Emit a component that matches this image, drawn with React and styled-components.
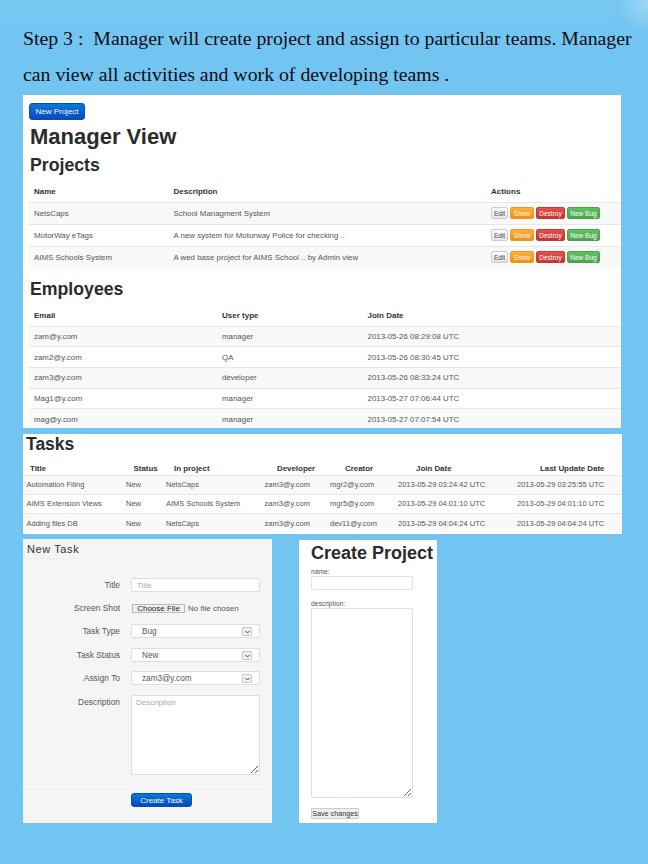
import React from "react";
import styled, { createGlobalStyle } from "styled-components";

const Global = createGlobalStyle`
  html, body { margin: 0; padding: 0; }
  body {
    width: 648px; height: 864px; overflow: hidden;
    background:
      radial-gradient(circle at 648px 0, #a2d9f6 0, #74c5f1 32px, rgba(116,197,241,0) 44px),
      linear-gradient(180deg, #78c8f3 0, #72c5f1 40px, #73c5f1 100%);
    font-family: "Liberation Sans", Arial, sans-serif;
    color: #333;
  }
  * { box-sizing: border-box; }
`;

const Page = styled.div`
  width: 648px; height: 864px; padding: 19.5px 0 0 23px;
`;
const Intro = styled.p`
  margin: 0 0 2.5px;
  font: 19.8px/36.5px "Liberation Serif", "Times New Roman", serif;
  color: #0b0b14;
  white-space: pre;
`;
const ManagerPanel = styled.section`
  width: 598px; height: 333px; background: #fff; padding: 8px 0 0 6px; overflow: hidden;
`;
const BlueButton = styled.button`
  display: block; padding: 0; border: 1px solid #0a4fb0; border-radius: 3px;
  width: ${p => p.$w}px; height: ${p => p.$h}px;
  background: linear-gradient(180deg, #0a79d8, #0449c4);
  color: #fff; font: ${p => p.$size}px "Liberation Sans", Arial, sans-serif;
  text-shadow: 0 -1px 0 rgba(0,0,0,.25);
`;
const MainTitle = styled.h1`
  margin: 3px 0 0; padding-left: 1px; font: bold 22px/28px "Liberation Sans", Arial, sans-serif; color: #2b2b2b;
`;
const SectionTitle = styled.h2`
  margin: ${p => p.$top}px 0 0; padding-left: 1px; font: bold 17.7px/24px "Liberation Sans", Arial, sans-serif; color: #2b2b2b;
`;
const Table = styled.div`
  margin-top: ${p => p.$top}px; font-size: ${p => p.$size}px;
`;
const HeadRow = styled.div`
  display: grid; grid-template-columns: ${p => p.$cols}; align-items: center;
  height: ${p => p.$h}px; padding-left: ${p => p.$pad}px;
  font-weight: bold; font-size: ${p => p.$size || 8}px; color: #333;
`;
const Row = styled.div`
  display: grid; grid-template-columns: ${p => p.$cols}; align-items: center;
  height: ${p => p.$h}px; padding-left: ${p => p.$pad}px;
  border-top: 1px solid #e8e8e8; color: #555;
  background: ${p => (p.$odd ? "#f9f9f9" : "#fff")};
`;
const Actions = styled.div`
  display: flex; gap: 2px;
`;
const ActionButton = styled.button`
  padding: 0; height: 12px; width: ${p => p.$w}px; border-radius: 2px;
  font: 6.5px "Liberation Sans", Arial, sans-serif;
  border: 1px solid ${p => p.$edge};
  background: ${p => p.$bg}; color: ${p => p.$fg};
`;
const TasksPanel = styled.section`
  width: 599px; height: 100px; margin-top: 6px; background: #fff; overflow: hidden;
`;
const TasksTitle = styled.h2`
  margin: 0; padding: 0 0 0 3px; font: bold 17.5px/20px "Liberation Sans", Arial, sans-serif; color: #2b2b2b;
`;
const FormsRow = styled.div`
  display: flex; gap: 27px; margin-top: 5px; align-items: flex-start;
`;
const TaskForm = styled.section`
  width: 249px; height: 284px; background: #f5f5f5; overflow: hidden;
`;
const FormHeader = styled.h3`
  margin: 0; height: 20px; padding-left: 4px;
  font: normal 11px/20px "Liberation Sans", Arial, sans-serif; letter-spacing: .6px; color: #333;
  border-bottom: 1px solid #efefef;
`;
const FormBody = styled.div`
  display: grid; grid-template-columns: 97px 129px; column-gap: 11px;
  padding-top: 19px; align-items: start; font-size: 8.4px; color: #555;
`;
const FieldLabel = styled.label`
  text-align: right; line-height: 14px; height: ${p => p.$h || 14}px; margin-bottom: ${p => p.$gap}px;
`;
const TextInput = styled.input`
  display: block; width: 129px; height: 14px; padding: 0 5px; margin-bottom: ${p => p.$gap}px;
  border: 1px solid #dedede; border-radius: 2px; background: #fff;
  font: 8px "Liberation Sans", Arial, sans-serif;
  &::placeholder { color: #aaa; }
`;
const FileInput = styled.input`
  display: block; width: 129px; height: 14px; margin: 0 0 ${p => p.$gap}px; padding: 0 0 0 1px;
  font: 8px/12px "Liberation Sans", Arial, sans-serif; color: #555;
  &::file-selector-button {
    width: 53px; height: 9px; margin: 3px 3px 0 0; padding: 0;
    border: 1px solid #bbb; background: #efefef; color: #222;
    font: 8px "Liberation Sans", Arial, sans-serif;
    line-height: 7px;
  }
`;
const SelectWrap = styled.div`
  position: relative; width: 129px; height: 14px; margin-bottom: ${p => p.$gap}px;
`;
const Select = styled.select`
  display: block; width: 100%; height: 100%; padding: 0 0 0 10px; appearance: none;
  border: 1px solid #dedede; border-radius: 2px; background: #fff; color: #555;
  font: 8.2px "Liberation Sans", Arial, sans-serif;
`;
const SelectArrow = styled.span`
  position: absolute; top: 3px; right: 8px; width: 10px; height: 9px;
  display: flex; align-items: center; justify-content: center;
  background: #eee; border: 1px solid #ccc; border-radius: 1px;
`;
const TextArea = styled.textarea`
  display: block; width: ${p => p.$w}px; height: ${p => p.$h}px; padding: 2px 4px; margin: 0; resize: vertical;
  border: 1px solid #dedede; border-radius: 2px; background: #fff;
  font: 8px "Liberation Sans", Arial, sans-serif;
  &::placeholder { color: #aaa; }
`;
const FormFooter = styled.div`
  margin-top: 9px; padding: 8px 0 0 108px; border-top: 1px solid #efefef;
`;
const ProjectForm = styled.section`
  width: 138px; height: 283px; margin-top: 1px; background: #fff; padding-left: 12px; overflow: hidden;
  font-size: 6.7px; color: #555;
`;
const ProjectTitle = styled.h1`
  margin: 0; padding-top: 2px; font: bold 18px/22px "Liberation Sans", Arial, sans-serif; color: #2b2b2b;
  white-space: nowrap;
`;
const SmallLabel = styled.label`
  display: block; line-height: 8px; margin-top: ${p => p.$top}px;
`;
const NameInput = styled.input`
  display: block; width: 102px; height: 14px; padding: 0 3px;
  border: 1px solid #e2e2e2; border-radius: 2px; background: #fff;
`;
const SaveButton = styled.button`
  display: block; margin-top: 10px; width: 48px; height: 11px; padding: 0;
  border: 1px solid #ccc; border-radius: 1px; background: #eee; color: #333;
  font: 7.2px "Liberation Sans", Arial, sans-serif; white-space: nowrap;
`;

const projectCols = "139.5px 317.5px 1fr";
const employeeCols = "188px 145.5px 1fr";
const taskHeadCols = "103.5px 40.5px 103px 68px 71px 124px 1fr";
const taskBodyCols = "99.5px 40px 98.5px 65.5px 68px 119px 1fr";

const projects = [
  ["NetsCaps", "School Managment System"],
  ["MotorWay eTags", "A new system for Motorway Police for checking .."],
  ["AIMS Schools System", "A wed base project for AIMS School .. by Admin view"],
];
const employees = [
  ["zam@y.com", "manager", "2013-05-26 08:29:08 UTC"],
  ["zam2@y.com", "QA", "2013-05-26 08:30:45 UTC"],
  ["zam3@y.com", "developer", "2013-05-26 08:33:24 UTC"],
  ["Mag1@y.com", "manager", "2013-05-27 07:06:44 UTC"],
  ["mag@y.com", "manager", "2013-05-27 07:07:54 UTC"],
];
const tasks = [
  ["Automation Filing", "New", "NetsCaps", "zam3@y.com", "mgr2@y.com", "2013-05-29 03:24:42 UTC", "2013-05-29 03:25:55 UTC"],
  ["AIMS Extension Views", "New", "AIMS Schools System", "zam3@y.com", "mgr5@y.com", "2013-05-29 04:01:10 UTC", "2013-05-29 04:01:10 UTC"],
  ["Adding files DB", "New", "NetsCaps", "zam3@y.com", "dev11@y.com", "2013-05-29 04:04:24 UTC", "2013-05-29 04:04:24 UTC"],
];

const Chevron = () => (
  <svg width="5" height="4" viewBox="0 0 5 4"><path d="M.5 1 L2.5 3 L4.5 1" fill="none" stroke="#444" strokeWidth="1" /></svg>
);

const SelectField = ({ value, gap }) => (
  <SelectWrap $gap={gap}>
    <Select defaultValue={value}><option>{value}</option></Select>
    <SelectArrow><Chevron /></SelectArrow>
  </SelectWrap>
);

export default function App() {
  return (
    <Page>
      <Global />
      <Intro>{"Step 3 :  Manager will create project and assign to particular teams. Manager\ncan view all activities and work of developing teams ."}</Intro>
      <ManagerPanel>
        <BlueButton $w={56} $h={17} $size={8}>New Project</BlueButton>
        <MainTitle>Manager View</MainTitle>
        <SectionTitle $top={2}>Projects</SectionTitle>
        <Table $top={3.5} $size={7.9}>
          <HeadRow $cols={projectCols} $h={21} $pad={5}>
            <span>Name</span><span>Description</span><span>Actions</span>
          </HeadRow>
          {projects.map((p, i) => (
            <Row key={p[0]} $cols={projectCols} $h={22} $pad={5} $odd={i % 2 === 0}>
              <span>{p[0]}</span>
              <span>{p[1]}</span>
              <Actions>
                <ActionButton $w={17} $edge="#ccc" $bg="linear-gradient(#fff,#e6e6e6)" $fg="#444">Edit</ActionButton>
                <ActionButton $w={24} $edge="#ec9a1e" $bg="linear-gradient(#fbb040,#f68f0e)" $fg="#fff">Show</ActionButton>
                <ActionButton $w={29} $edge="#c23a36" $bg="linear-gradient(#e0534e,#c6322e)" $fg="#fff">Destroy</ActionButton>
                <ActionButton $w={33} $edge="#4aa24a" $bg="linear-gradient(#62c162,#4ba64b)" $fg="#fff">New Bug</ActionButton>
              </Actions>
            </Row>
          ))}
        </Table>
        <SectionTitle $top={9.5}>Employees</SectionTitle>
        <Table $top={4.5} $size={7.9}>
          <HeadRow $cols={employeeCols} $h={20} $pad={5}>
            <span>Email</span><span>User type</span><span>Join Date</span>
          </HeadRow>
          {employees.map((e, i) => (
            <Row key={e[0]} $cols={employeeCols} $h={20.7} $pad={5} $odd={i % 2 === 0}>
              <span>{e[0]}</span><span>{e[1]}</span><span>{e[2]}</span>
            </Row>
          ))}
        </Table>
      </ManagerPanel>
      <TasksPanel>
        <TasksTitle>Tasks</TasksTitle>
        <Table $top={7.7} $size={7.5}>
          <HeadRow $cols={taskHeadCols} $h={13} $pad={7} $size={7.9}>
            <span>Title</span><span>Status</span><span>In project</span><span>Developer</span><span>Creator</span><span>Join Date</span><span>Last Update Date</span>
          </HeadRow>
          {tasks.map((t, i) => (
            <Row key={t[0]} $cols={taskBodyCols} $h={19.2} $pad={3.5} $odd={i % 2 === 0}>
              {t.map((c, j) => <span key={j}>{c}</span>)}
            </Row>
          ))}
        </Table>
      </TasksPanel>
      <FormsRow>
        <TaskForm>
          <FormHeader>New Task</FormHeader>
          <FormBody>
            <FieldLabel $gap={9}>Title</FieldLabel>
            <TextInput placeholder="Title" $gap={9} />
            <FieldLabel $gap={9}>Screen Shot</FieldLabel>
            <FileInput type="file" $gap={9} />
            <FieldLabel $gap={10}>Task Type</FieldLabel>
            <SelectField value="Bug" gap={10} />
            <FieldLabel $gap={9}>Task Status</FieldLabel>
            <SelectField value="New" gap={9} />
            <FieldLabel $gap={10}>Assign To</FieldLabel>
            <SelectField value="zam3@y.com" gap={10} />
            <FieldLabel $h={80}>Description</FieldLabel>
            <TextArea placeholder="Description" $w={129} $h={80} />
          </FormBody>
          <FormFooter>
            <BlueButton $w={61} $h={14} $size={8}>Create Task</BlueButton>
          </FormFooter>
        </TaskForm>
        <ProjectForm>
          <ProjectTitle>Create Project</ProjectTitle>
          <SmallLabel $top={4}>name:</SmallLabel>
          <NameInput />
          <SmallLabel $top={10}>description:</SmallLabel>
          <TextArea $w={102} $h={190} />
          <SaveButton>Save changes</SaveButton>
        </ProjectForm>
      </FormsRow>
    </Page>
  );
}
